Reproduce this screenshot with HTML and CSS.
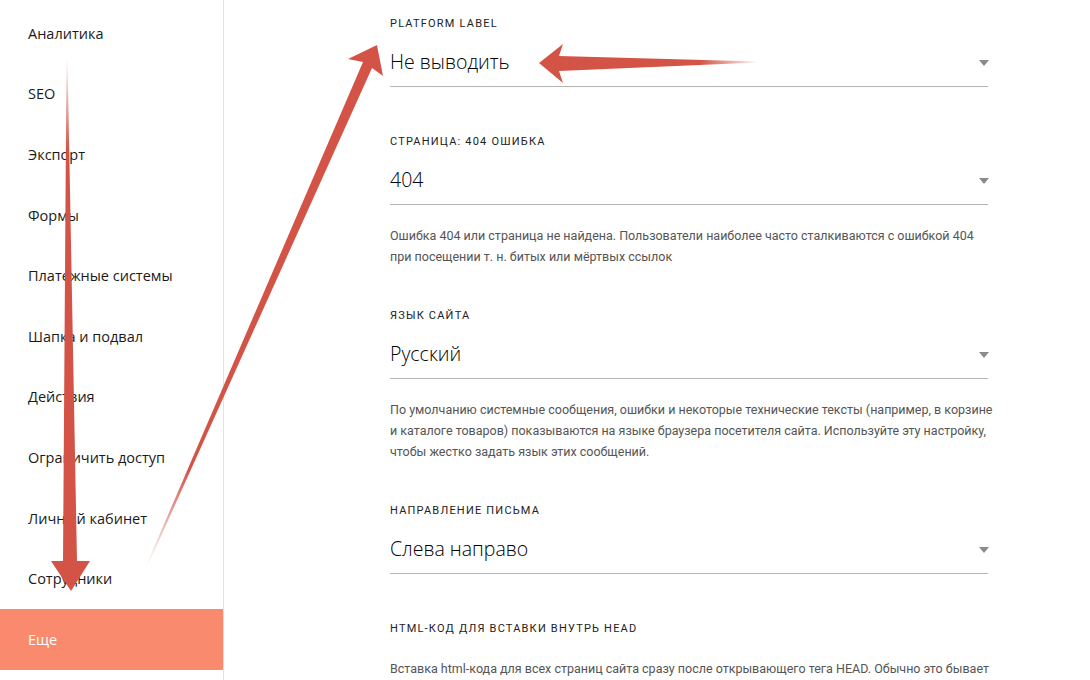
FILE: index.html
```html
<!DOCTYPE html>
<html lang="ru">
<head>
<meta charset="utf-8">
<title>Настройки сайта</title>
<link rel="stylesheet" href="styles.css">
</head>
<body>
<div class="page">
  <nav class="sidebar">
    <a class="nav-item">Аналитика</a>
    <a class="nav-item">SEO</a>
    <a class="nav-item">Экспорт</a>
    <a class="nav-item">Формы</a>
    <a class="nav-item">Платежные системы</a>
    <a class="nav-item">Шапка и подвал</a>
    <a class="nav-item">Действия</a>
    <a class="nav-item">Ограничить доступ</a>
    <a class="nav-item">Личный кабинет</a>
    <a class="nav-item">Сотрудники</a>
    <a class="nav-item active">Еще</a>
  </nav>
  <main class="content">
    <div class="form">
      <div class="field">
        <div class="label">Platform label</div>
        <div class="select"><span class="value">Не выводить</span><span class="caret"></span></div>
      </div>
      <div class="field has-desc">
        <div class="label">Страница: 404 ошибка</div>
        <div class="select"><span class="value">404</span><span class="caret"></span></div>
        <p class="desc">Ошибка 404 или страница не найдена. Пользователи наиболее часто сталкиваются с ошибкой 404<br>при посещении т. н. битых или мёртвых ссылок</p>
      </div>
      <div class="field has-desc">
        <div class="label">Язык сайта</div>
        <div class="select"><span class="value">Русский</span><span class="caret"></span></div>
        <p class="desc">По умолчанию системные сообщения, ошибки и некоторые технические тексты (например, в корзине<br>и каталоге товаров) показываются на языке браузера посетителя сайта. Используйте эту настройку,<br>чтобы жестко задать язык этих сообщений.</p>
      </div>
      <div class="field">
        <div class="label">Направление письма</div>
        <div class="select"><span class="value">Слева направо</span><span class="caret"></span></div>
      </div>
      <div class="field has-desc">
        <div class="label">HTML-код для вставки внутрь HEAD</div>
        <p class="desc desc-first">Вставка html-кода для всех страниц сайта сразу после открывающего тега HEAD. Обычно это бывает</p>
      </div>
    </div>
  </main>
  <svg class="annotations" width="1090" height="680" viewBox="0 0 1090 680" aria-hidden="true">
    <defs>
      <linearGradient id="fadeV" x1="0" y1="58" x2="0" y2="150" gradientUnits="userSpaceOnUse">
        <stop offset="0" stop-color="#d35446" stop-opacity="0"/>
        <stop offset="1" stop-color="#d35446" stop-opacity="1"/>
      </linearGradient>
      <linearGradient id="fadeD" x1="147" y1="566" x2="190" y2="470" gradientUnits="userSpaceOnUse">
        <stop offset="0" stop-color="#d35446" stop-opacity="0"/>
        <stop offset="1" stop-color="#d35446" stop-opacity="1"/>
      </linearGradient>
      <linearGradient id="fadeH" x1="760" y1="0" x2="700" y2="0" gradientUnits="userSpaceOnUse">
        <stop offset="0" stop-color="#d35446" stop-opacity="0"/>
        <stop offset="1" stop-color="#d35446" stop-opacity="1"/>
      </linearGradient>
    </defs>
    <polygon fill="url(#fadeV)" points="66.5,58 67.5,58 77,561 90,561 71,591 51,561 63,561"/>
    <polygon fill="url(#fadeD)" points="146,566 147.5,566 372,68 383,76 377,45 348,59 363,62"/>
    <polygon fill="url(#fadeH)" points="539,63 563,44 559,56 758,61.5 758,62.5 559,71 563,83"/>
  </svg>
</div>
</body>
</html>
```

FILE: styles.css
```css
* { box-sizing: border-box; }

html, body {
  margin: 0;
  padding: 0;
  background: #fff;
}

body {
  font-family: Roboto, "Noto Sans", sans-serif;
  color: #000;
}

.page {
  position: relative;
  display: flex;
  width: 1090px;
  height: 680px;
  overflow: hidden;
}

.sidebar {
  width: 224px;
  flex: none;
  border-right: 1px solid #e3e3e3;
  padding-top: 3px;
  display: flex;
  flex-direction: column;
}

.nav-item {
  display: flex;
  align-items: center;
  height: 60.6px;
  flex: none;
  padding-left: 28px;
  font-family: "Open Sans", Roboto, sans-serif;
  font-size: 14.5px;
  font-weight: 400;
  color: #1a1a1a;
  text-decoration: none;
}

.nav-item.active {
  background: #f98a6e;
  color: #fff;
}

.content {
  flex: 1;
  padding-left: 166px;
}

.form {
  width: 598px;
  padding-top: 17px;
}

.field {
  padding-bottom: 48px;
}

.field.has-desc {
  padding-bottom: 42px;
}

.label {
  font-size: 11px;
  line-height: 14px;
  letter-spacing: 1.2px;
  text-transform: uppercase;
  color: #222;
}

.select {
  display: flex;
  align-items: center;
  justify-content: space-between;
  margin-top: 14px;
  height: 42px;
  padding-bottom: 8px;
  border-bottom: 1px solid #b4b4b4;
}

.value {
  font-family: "Open Sans", Roboto, sans-serif;
  font-size: 19.5px;
  font-weight: 300;
  line-height: 32px;
}

.caret {
  width: 0;
  height: 0;
  margin-right: -1px;
  margin-top: 2px;
  border-left: 5px solid transparent;
  border-right: 5px solid transparent;
  border-top: 6px solid #8a8a8a;
}

.desc {
  margin: 20px 0 0;
  font-size: 12.5px;
  line-height: 21px;
  color: #555;
  white-space: nowrap;
}

.desc-first {
  margin-top: 22px;
}

.annotations {
  position: absolute;
  left: 0;
  top: 0;
  pointer-events: none;
}
```
